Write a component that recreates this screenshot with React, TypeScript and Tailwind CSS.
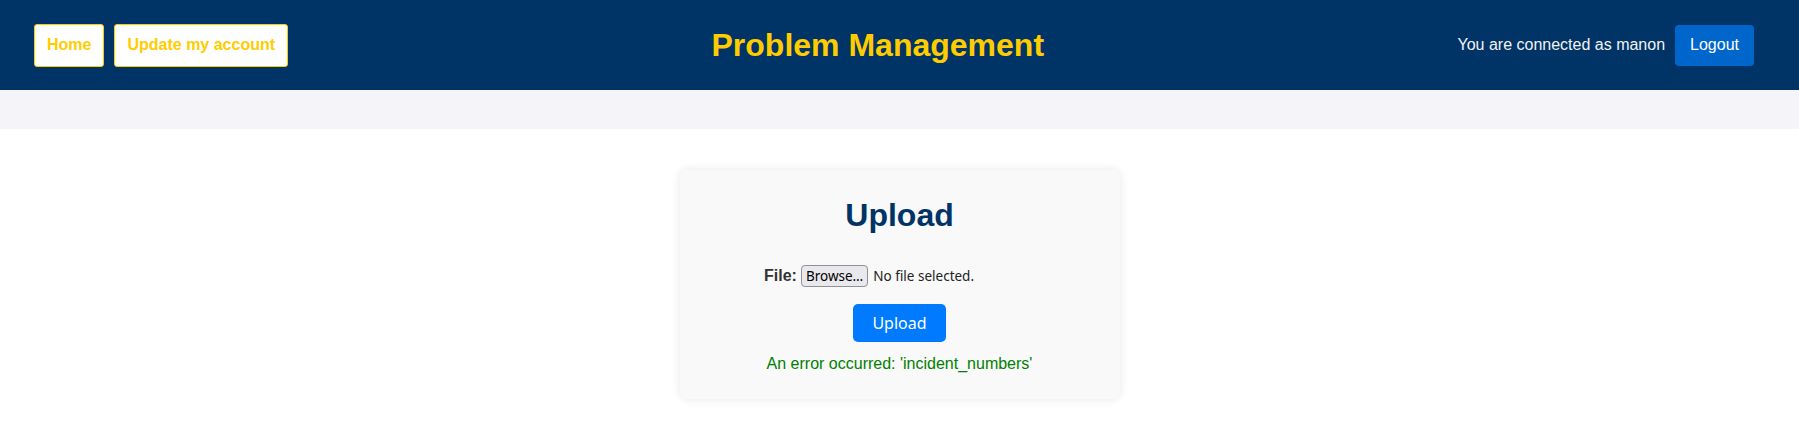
export default function App() {
  return (
    <div className="min-h-[430px] bg-white font-['Liberation_Sans',Arial,sans-serif]">
      <header className="flex h-[90px] items-center justify-between bg-[#003366] pl-[34px] pr-[45px]">
        <nav className="flex items-center gap-[10px]">
          <button className="h-[43px] rounded-[3px] border border-[#ffcc00] bg-white px-[12px] text-[16px] font-bold text-[#ffcc00]">
            Home
          </button>
          <button className="h-[43px] rounded-[3px] border border-[#ffcc00] bg-white px-[12px] text-[16px] font-bold text-[#ffcc00]">
            Update my account
          </button>
        </nav>
        <h1 className="ml-[10px] text-[32px] font-bold text-[#ffcc00]">Problem Management</h1>
        <div className="flex items-center gap-[10px]">
          <span className="text-[16px] text-[#f2f2f2]">You are connected as manon</span>
          <button className="h-[41px] rounded-[4px] bg-[#0066cc] px-[15px] text-[16px] text-white">
            Logout
          </button>
        </div>
      </header>

      <div className="h-[39px] bg-[#f4f4f9]"></div>

      <main className="flex justify-center pt-[41px]">
        <div className="w-[440px] rounded-[8px] bg-[#f9f9f9] px-5 pt-[27px] pb-[26px] text-center shadow-[0_0_10px_rgba(0,0,0,0.1)]">
          <h2 className="text-[32px] font-bold leading-[37px] text-[#003366]">Upload</h2>
          <div className="mt-[30px] flex items-center justify-center">
            <label className="text-[16px] font-bold text-[#333]">File:</label>
            <span className="ml-[4px] flex w-[234px] items-center font-['Noto_Sans',sans-serif] text-[13.5px] text-[#222]">
              <span className="flex h-[22px] items-center rounded-[4px] border border-[#8f8f9d] bg-[#e9e9ed] px-[4px] text-black">
                Browse…
              </span>
              <span className="ml-[5px]">No file selected.</span>
            </span>
          </div>
          <button className="mt-[16px] h-[38px] w-[93px] rounded-[5px] bg-[#007bff] font-['Noto_Sans',sans-serif] text-[16px] text-white">
            Upload
          </button>
          <p className="mt-[13px] text-[16px] leading-[18px] text-[#008000]">
            An error occurred: 'incident_numbers'
          </p>
        </div>
      </main>
    </div>
  );
}
